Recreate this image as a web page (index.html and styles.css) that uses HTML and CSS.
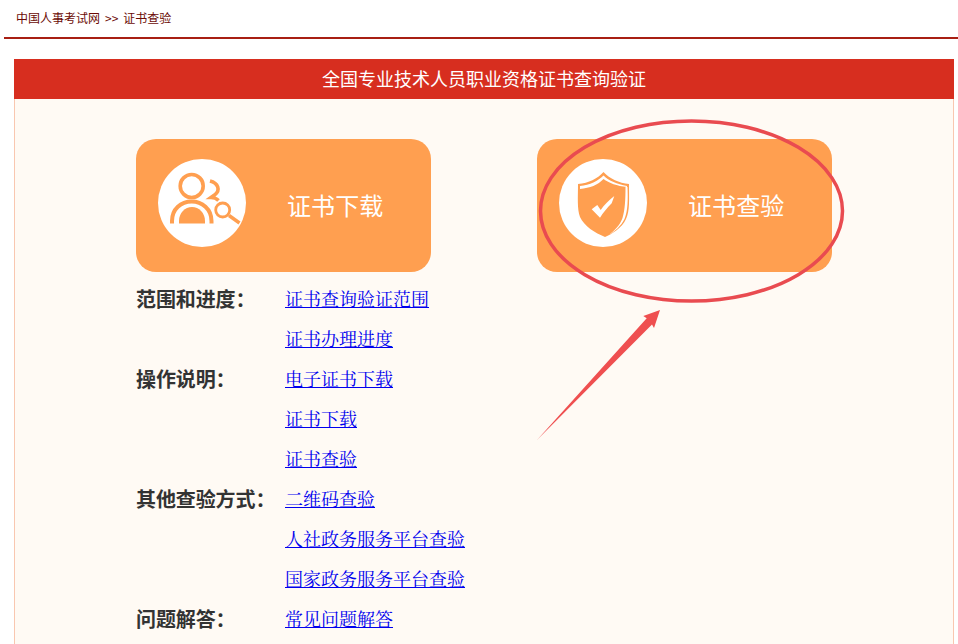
FILE: index.html
```html
<!DOCTYPE html>
<html lang="zh-CN">
<head>
<meta charset="utf-8">
<title>证书查验</title>
<link rel="stylesheet" href="styles.css">
</head>
<body>
<nav class="crumbs"><a href="#">中国人事考试网</a><span class="sep">&gt;&gt;</span><a href="#">证书查验</a></nav>
<main class="panel">
  <h1 class="panel-title">全国专业技术人员职业资格证书查询验证</h1>
  <div class="panel-body">
    <section class="col">
      <a class="card" href="#">
        <span class="disc">
          <svg class="icon" viewBox="0 0 88 88" width="88" height="88" aria-hidden="true">
            <g fill="none" stroke="#ff9f50">
              <circle cx="33.7" cy="27" r="11.5" stroke-width="3.6"/>
              <path d="M14 64.5 V62 C14 50 23 42.5 33.7 42.5 C44 42.5 53.5 50 53.5 62 V64.5" stroke-width="4"/>
              <path d="M52 22 C60 24 63 31 56.5 36 L53 38.5 C56 38.5 58.5 39.5 60.5 41.5" stroke-width="3.6"/>
              <circle cx="64.7" cy="51" r="7" stroke-width="2.8"/>
              <path d="M71 56.5 L81.5 64" stroke-width="3.4"/>
            </g>
            <path d="M21 64.5 V62 C21 54 27 48 34 48 C41 48 47 54 47 62 V64.5 Z" fill="#ff9f50"/>
          </svg>
        </span>
        <span class="card-text">证书下载</span>
      </a>
      <dl class="links">
        <div class="group">
          <dt>范围和进度：</dt>
          <dd><a href="#">证书查询验证范围</a></dd>
          <dd><a href="#">证书办理进度</a></dd>
        </div>
        <div class="group">
          <dt>操作说明：</dt>
          <dd><a href="#">电子证书下载</a></dd>
          <dd><a href="#">证书下载</a></dd>
          <dd><a href="#">证书查验</a></dd>
        </div>
        <div class="group">
          <dt>其他查验方式：</dt>
          <dd><a href="#">二维码查验</a></dd>
          <dd><a href="#">人社政务服务平台查验</a></dd>
          <dd><a href="#">国家政务服务平台查验</a></dd>
        </div>
        <div class="group">
          <dt>问题解答：</dt>
          <dd><a href="#">常见问题解答</a></dd>
        </div>
      </dl>
    </section>
    <section class="col">
      <a class="card" href="#">
        <span class="disc">
          <svg class="icon" viewBox="0 0 88 88" width="88" height="88" aria-hidden="true">
            <path d="M19 25 C30 24 38 20 44.5 13 C51 20 60 24 70 25 C70 40 71 52 67 60 C63 69 53 75 46 78 C36 74 25 67 21 58 C18 50 19 38 19 25 Z" fill="#ff9f50"/>
            <path d="M21 30 L21 27 C31 26 39 22 44.5 16.5 C50 22 58 25 68 27 L68 28 C58 27 50 24 44.5 20 C39 26 31 29 21 30 Z" fill="#fff"/>
            <path d="M66.5 28 L68.5 28 C69 40 69 52 65.5 60 C62 67 56 72 50 76 C56 71 61 66 63.5 59 C66 51 66.5 40 66.5 28 Z" fill="#fff"/>
            <path d="M32.7 50.3 L38.3 46 L41.7 51 C45 46 50 41 55.3 37 L52.7 44.3 C48 49 44 54 41 58.7 Z" fill="#fff"/>
          </svg>
        </span>
        <span class="card-text">证书查验</span>
      </a>
    </section>
    <svg class="mark" viewBox="0 0 958 644" width="958" height="644" aria-hidden="true">
      <ellipse cx="691.5" cy="211" rx="151" ry="90" fill="none" stroke="#e94b50" stroke-width="3.5"/>
      <path d="M537 440 L646.7 318.3 L643.3 316 L660 310 L654 328 L652 324.5 Z" fill="#ef4f50"/>
    </svg>
  </div>
</main>
</body>
</html>
```
FILE: styles.css
```css
* { box-sizing: border-box; }
html, body { margin: 0; height: 644px; overflow: hidden; background: #fff; }
body { font-family: "Noto Sans CJK SC", "Liberation Sans", sans-serif; }
.crumbs {
  margin-left: 4px;
  padding: 9px 0 0 12px;
  height: 39px;
  border-bottom: 2px solid #a81f13;
  font-size: 12px;
  line-height: 18px;
  color: #6b0a05;
}
.crumbs a { color: #6b0a05; text-decoration: none; }
.sep { margin: 0 5px; }
.panel { margin: 20px 4px 0 14px; }
.panel-title {
  margin: 0;
  height: 40px;
  background: #d72e1f;
  color: #fff;
  font-size: 18px;
  font-weight: 400;
  line-height: 38px;
  text-align: center;
}
.panel-body {
  position: relative;
  display: flex;
  height: 545px;
  padding: 40px 0 0 121px;
  gap: 106px;
  background: #fffaf4;
  border-left: 1px solid #f9c7b0;
  border-right: 1px solid #f9c7b0;
}
.col { width: 295px; }
.card {
  display: flex;
  align-items: center;
  height: 133px;
  padding-left: 22px;
  border-radius: 20px;
  background: #ff9f50;
  color: #fff;
  text-decoration: none;
}
.disc {
  width: 88px;
  height: 88px;
  margin-bottom: 5px;
  border-radius: 50%;
  background: #fff;
  flex: none;
}
.icon { display: block; }
.card-text {
  margin: 0 0 2px 41px;
  font-size: 24px;
  font-weight: 400;
  line-height: 32px;
  letter-spacing: 0.1px;
}
.links { margin: 6px 0 0; }
.group { display: grid; grid-template-columns: 149px max-content; grid-auto-rows: 40px; align-items: center; }
.group dt { grid-column: 1; grid-row: 1; padding-top: 1px; font-size: 20px; line-height: 24px; font-weight: 700; color: #333; white-space: nowrap; letter-spacing: -0.1px; }
.group dd { grid-column: 2; margin: 0; font-size: 18px; line-height: 24px; font-family: "Noto Serif CJK SC", "Noto Sans CJK SC", serif; }
.group a { color: #0000ee; text-decoration: underline; }
.mark { position: absolute; left: -15px; top: -99px; pointer-events: none; }
```
